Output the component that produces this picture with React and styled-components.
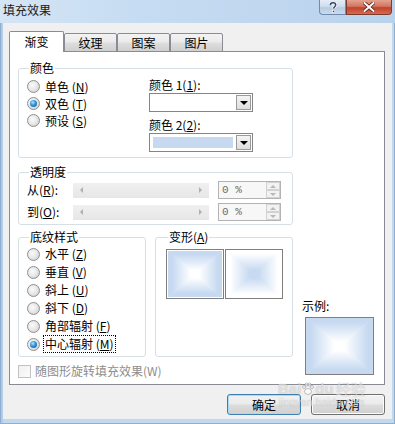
import React, { useId } from 'react';
import styled, { createGlobalStyle } from 'styled-components';

const FONT = `"Noto Sans CJK SC", "Liberation Sans", sans-serif`;

const GlobalStyle = createGlobalStyle`
  html, body { margin: 0; padding: 0; }
  body {
    width: 395px;
    height: 424px;
    overflow: hidden;
    font-family: ${FONT};
    font-size: 12px;
    line-height: 14px;
    color: #000;
  }
`;

const Window = styled.div`
  position: relative;
  width: 395px;
  height: 424px;
  box-sizing: border-box;
  padding: 0 2px 4px 2px;
  display: flex;
  flex-direction: column;
  background: linear-gradient(to right, #a9c4e2 0px, #c3d9ef 3px, #c3d9ef 392px, #a9c4e2 395px);
  border-left: 1px solid #8eaed2;
  border-right: 1px solid #8eaed2;
  border-bottom: 1px solid #8eaed2;
`;

const TitleBar = styled.div`
  height: 23px;
  flex: none;
  display: flex;
  align-items: flex-start;
  justify-content: space-between;
  margin: 0 -3px;
  padding-left: 3px;
  background: linear-gradient(to right, #d4e5f5 0%, #c6dcf2 35%, #b9d2ec 100%);
`;

const Title = styled.div`
  padding-top: 3px;
  font-size: 12px;
  line-height: 14px;
  color: #1a1a1a;
`;

const Controls = styled.div`
  display: flex;
  margin-right: 3px;
`;

const CtlButton = styled.div`
  height: 15px;
  box-sizing: border-box;
  width: ${p => p.$w}px;
  display: flex;
  align-items: center;
  justify-content: center;
  border: 1px solid ${p => (p.$close ? '#7d3a30' : '#6f8cae')};
  border-top: none;
  border-radius: ${p => (p.$close ? '0 0 4px 0' : '0 0 0 4px')};
  background: ${p =>
    p.$close
      ? 'linear-gradient(to bottom, #e6a290 0%, #d27662 45%, #c2422c 55%, #d56a4f 100%)'
      : 'linear-gradient(to bottom, #e4edf7 0%, #cfdded 45%, #b7cbe2 55%, #c9daec 100%)'};
  svg { display: block; }
`;

const Client = styled.div`
  flex: 1;
  background: #f0f0f0;
  padding: 8px 7px 0 6px;
  display: flex;
  flex-direction: column;
`;

const TabStrip = styled.div`
  position: relative;
  z-index: 1;
  height: 21px;
  margin-bottom: -1px;
  display: flex;
  align-items: flex-end;
`;

const Tab = styled.div`
  box-sizing: border-box;
  width: ${p => (p.$active ? 55 : 53)}px;
  height: ${p => (p.$active ? 21 : 19)}px;
  border: 1px solid #898c95;
  border-bottom: ${p => (p.$active ? 'none' : '1px solid #898c95')};
  border-radius: 2px 2px 0 0;
  background: ${p => (p.$active ? '#fff' : 'linear-gradient(to bottom, #f3f3f3 0%, #ebebeb 45%, #dddddd 55%, #cfcfcf 100%)')};
  display: flex;
  align-items: center;
  justify-content: center;
  padding-bottom: ${p => (p.$active ? 1 : 0)}px;
  font-size: 12px;
`;

const Panel = styled.div`
  box-sizing: border-box;
  width: 376px;
  height: 334px;
  background: #fff;
  border: 1px solid #898c95;
  padding: 9px 0 0 8px;
  display: flex;
  flex-direction: column;
`;

const Group = styled.fieldset`
  box-sizing: border-box;
  margin: ${p => p.$mt || 0}px 0 0 0;
  width: ${p => p.$w}px;
  height: ${p => p.$h}px;
  border: 1px solid #d5dfe5;
  border-radius: 3px;
  padding: ${p => p.$pad || '0 0 0 8px'};
  min-width: 0;
`;

const Legend = styled.legend`
  padding: 0 1px;
  margin-left: 2px;
  font-size: 12px;
  line-height: 14px;
`;

const Key = styled.span`
  text-decoration: underline;
`;

const ColorBody = styled.div`
  display: grid;
  grid-template-columns: 122px 104px;
`;

const RadioList = styled.div`
  display: flex;
  flex-direction: column;
  padding-top: ${p => p.$pt || 0}px;
`;

const RadioRow = styled.div`
  height: ${p => p.$h}px;
  display: flex;
  align-items: center;
  gap: 3px;
  white-space: nowrap;
`;

const RadioCircle = styled.span`
  flex: none;
  box-sizing: border-box;
  width: 13px;
  height: 13px;
  border-radius: 50%;
  border: 1px solid #8e8f8f;
  background: radial-gradient(circle at 40% 40%, #fbfbfb 0%, #e9e9e9 45%, #d3d3d3 80%, #f4f4f4 100%);
  display: flex;
  align-items: center;
  justify-content: center;
  &::after {
    content: '';
    display: ${p => (p.$checked ? 'block' : 'none')};
    width: 7px;
    height: 7px;
    border-radius: 50%;
    background: radial-gradient(circle at 40% 35%, #aee4ff 0%, #2f93da 45%, #0f4f93 100%);
  }
`;

const RadioText = styled.span`
  padding: 1px 1px;
  border: 1px dotted ${p => (p.$focus ? '#000' : 'transparent')};
`;

const ColorSide = styled.div`
  display: flex;
  flex-direction: column;
  padding-top: 3px;
`;

const FieldLabel = styled.div`
  height: 14px;
  margin-bottom: ${p => p.$mb || 0}px;
  white-space: nowrap;
`;

const Combo = styled.div`
  box-sizing: border-box;
  width: 104px;
  height: 19px;
  border: 1px solid #858585;
  background: #fff;
  display: flex;
  padding: 1px;
  margin-bottom: ${p => p.$mb || 0}px;
`;

const Swatch = styled.div`
  flex: 1;
  margin: 2px 3px 2px 2px;
  background: ${p => p.$color || 'transparent'};
`;

const DropBtn = styled.div`
  box-sizing: border-box;
  width: 15px;
  border: 1px solid #9a9a9a;
  background: linear-gradient(to bottom, #f4f4f4, #dedede);
  display: flex;
  align-items: center;
  justify-content: center;
  &::after {
    content: '';
    border-left: 4px solid transparent;
    border-right: 4px solid transparent;
    border-top: 4px solid #000;
  }
`;

const SliderRow = styled.div`
  height: ${p => p.$h}px;
  display: flex;
  align-items: center;
`;

const SliderLabel = styled.div`
  width: 46px;
`;

const Track = styled.div`
  box-sizing: border-box;
  width: 136px;
  height: 15px;
  background: linear-gradient(to bottom, #f0f0f0, #e6e6e6);
  display: flex;
  align-items: center;
  justify-content: space-between;
  padding: 0 7px;
  margin-right: 9px;
`;

const Arrow = styled.span`
  width: 0;
  height: 0;
  border-top: 3px solid transparent;
  border-bottom: 3px solid transparent;
  ${p => (p.$dir === 'left' ? 'border-right: 3px solid #b0b0b0;' : 'border-left: 3px solid #b0b0b0;')}
`;

const Spin = styled.div`
  box-sizing: border-box;
  width: 63px;
  height: 18px;
  border: 1px solid #b3b3b3;
  background: #f7f7f7;
  display: flex;
`;

const SpinText = styled.div`
  flex: 1;
  padding-left: 3px;
  color: #6d6d6d;
  font-size: 11px;
  line-height: 16px;
  font-family: "Liberation Mono", monospace;
`;

const SpinBtns = styled.div`
  width: 14px;
  display: flex;
  flex-direction: column;
`;

const SpinBtn = styled.div`
  flex: 1;
  box-sizing: border-box;
  border: 1px solid #d2d2d2;
  background: #f2f2f2;
  display: flex;
  align-items: center;
  justify-content: center;
  &::after {
    content: '';
    border-left: 3px solid transparent;
    border-right: 3px solid transparent;
    ${p => (p.$up ? 'border-bottom: 3px solid #b8b8b8;' : 'border-top: 3px solid #b8b8b8;')}
  }
`;

const BottomGrid = styled.div`
  margin-top: 5px;
  display: grid;
  grid-template-columns: 128px 138px auto;
  column-gap: 9px;
`;

const Variants = styled.div`
  display: flex;
  gap: 1px;
  padding-top: 5px;
`;

const Tile = styled.div`
  box-sizing: border-box;
  width: 58px;
  height: 50px;
  border: 1px solid #7f7f7f;
  padding: ${p => (p.$selected ? 1 : 0)}px;
  background: #fff;
  display: flex;
  svg { display: block; }
`;

const SampleCol = styled.div`
  grid-column: 3;
  grid-row: 1 / span 2;
  align-self: end;
  display: flex;
  flex-direction: column;
  margin-bottom: 3px;
`;

const SampleLabel = styled.div`
  height: 14px;
  margin-bottom: 4px;
`;

const SampleBox = styled.div`
  box-sizing: border-box;
  width: 69px;
  height: 58px;
  margin-left: 3px;
  border: 1px solid #7f7f7f;
  display: flex;
  svg { display: block; }
`;

const CheckRow = styled.div`
  grid-column: 1 / span 2;
  margin-top: 7px;
  display: flex;
  align-items: center;
  gap: 4px;
  color: #8d8d8d;
  white-space: nowrap;
`;

const CheckBox = styled.span`
  box-sizing: border-box;
  width: 13px;
  height: 13px;
  border: 1px solid #c2c2c2;
  background: linear-gradient(135deg, #f0f0f0, #fbfbfb);
`;

const ButtonRow = styled.div`
  width: 376px;
  display: flex;
  justify-content: flex-end;
  gap: 10px;
  margin-top: 9px;
`;

const Button = styled.div`
  box-sizing: border-box;
  width: 74px;
  height: 21px;
  border: 1px solid ${p => (p.$default ? '#3c7fb1' : '#707070')};
  border-radius: 3px;
  box-shadow: ${p => (p.$default ? 'inset 0 0 0 1px #a8dcf6' : 'inset 0 0 0 1px #fcfcfc')};
  background: linear-gradient(to bottom, #f2f2f2 0%, #ebebeb 48%, #dddddd 52%, #cfcfcf 100%);
  display: flex;
  align-items: center;
  justify-content: center;
`;

const Watermark = styled.div`
  position: absolute;
  left: 277px;
  top: 381px;
  display: flex;
  flex-direction: column;
  align-items: center;
  color: rgba(255, 255, 255, 0.55);
  text-shadow: 0 0 1px rgba(120, 120, 120, 0.5);
  pointer-events: none;
`;

const MarkBrand = styled.div`
  display: flex;
  align-items: center;
  font-family: "Liberation Sans", sans-serif;
  font-weight: bold;
  font-size: 15px;
  line-height: 16px;
  span:last-child { font-family: ${FONT}; font-weight: normal; margin-left: 2px; }
`;

const MarkUrl = styled.div`
  font-family: "Liberation Sans", sans-serif;
  font-size: 10px;
  line-height: 12px;
  letter-spacing: 0.3px;
`;

function SquareGradient({ w, h, edge, center }) {
  const id = useId().replace(/:/g, '');
  const cx = w / 2;
  const cy = h / 2;
  const sides = [
    { k: 't', pts: `0,0 ${w},0 ${cx},${cy}`, g: { x1: 0, y1: 0, x2: 0, y2: cy } },
    { k: 'b', pts: `0,${h} ${w},${h} ${cx},${cy}`, g: { x1: 0, y1: h, x2: 0, y2: cy } },
    { k: 'l', pts: `0,0 0,${h} ${cx},${cy}`, g: { x1: 0, y1: 0, x2: cx, y2: 0 } },
    { k: 'r', pts: `${w},0 ${w},${h} ${cx},${cy}`, g: { x1: w, y1: 0, x2: cx, y2: 0 } },
  ];
  return (
    <svg width={w} height={h} viewBox={`0 0 ${w} ${h}`}>
      <defs>
        {sides.map(s => (
          <linearGradient key={s.k} id={id + s.k} gradientUnits="userSpaceOnUse" {...s.g}>
            <stop offset="0" stopColor={edge} />
            <stop offset="0.15" stopColor={edge} />
            <stop offset="0.85" stopColor={center} />
            <stop offset="1" stopColor={center} />
          </linearGradient>
        ))}
      </defs>
      {sides.map(s => (
        <polygon key={s.k} points={s.pts} fill={`url(#${id + s.k})`} stroke={`url(#${id + s.k})`} strokeWidth="0.6" />
      ))}
    </svg>
  );
}

const BLUE = '#c6d9f1';

function Radio({ h, checked, focus, children }) {
  return (
    <RadioRow $h={h}>
      <RadioCircle $checked={checked} />
      <RadioText $focus={focus}>{children}</RadioText>
    </RadioRow>
  );
}

function Slider({ label }) {
  return (
    <SliderRow $h={22}>
      <SliderLabel>{label}</SliderLabel>
      <Track><Arrow $dir="left" /><Arrow $dir="right" /></Track>
      <Spin>
        <SpinText>0 %</SpinText>
        <SpinBtns><SpinBtn $up /><SpinBtn /></SpinBtns>
      </Spin>
    </SliderRow>
  );
}

export default function App() {
  return (
    <>
      <GlobalStyle />
      <Window>
        <TitleBar>
          <Title>填充效果</Title>
          <Controls>
            <CtlButton $w={27}>
              <svg width="8" height="11" viewBox="0 0 8 11">
                <path d="M1.3 3.2 C1.3 1.4 2.5 0.8 4 0.8 C5.6 0.8 6.7 1.7 6.7 3 C6.7 4.6 4.6 4.8 4.6 6.6" fill="none" stroke="#fff" strokeWidth="3" />
                <path d="M1.3 3.2 C1.3 1.4 2.5 0.8 4 0.8 C5.6 0.8 6.7 1.7 6.7 3 C6.7 4.6 4.6 4.8 4.6 6.6" fill="none" stroke="#33475f" strokeWidth="1.5" />
                <rect x="3.6" y="8.3" width="2" height="2" fill="#33475f" stroke="#fff" strokeWidth="0.6" />
              </svg>
            </CtlButton>
            <CtlButton $w={46} $close>
              <svg width="12" height="10" viewBox="0 0 12 10">
                <path d="M1.5 1 L10.5 9 M10.5 1 L1.5 9" stroke="#5d1c12" strokeWidth="3.6" strokeLinecap="square" />
                <path d="M1.5 1 L10.5 9 M10.5 1 L1.5 9" stroke="#fff" strokeWidth="2" strokeLinecap="square" />
              </svg>
            </CtlButton>
          </Controls>
        </TitleBar>
        <Client>
          <TabStrip>
            <Tab $active>渐变</Tab>
            <Tab>纹理</Tab>
            <Tab>图案</Tab>
            <Tab>图片</Tab>
          </TabStrip>
          <Panel>
            <Group $w={275} $h={97}>
              <Legend>颜色</Legend>
              <ColorBody>
                <RadioList $pt={3}>
                  <Radio h={17}>单色 (<Key>N</Key>)</Radio>
                  <Radio h={17} checked>双色 (<Key>T</Key>)</Radio>
                  <Radio h={17}>预设 (<Key>S</Key>)</Radio>
                </RadioList>
                <ColorSide>
                  <FieldLabel $mb={1}>颜色 1(<Key>1</Key>):</FieldLabel>
                  <Combo $mb={6}>
                    <Swatch />
                    <DropBtn />
                  </Combo>
                  <FieldLabel $mb={1}>颜色 2(<Key>2</Key>):</FieldLabel>
                  <Combo>
                    <Swatch $color={BLUE} />
                    <DropBtn />
                  </Combo>
                </ColorSide>
              </ColorBody>
            </Group>

            <Group $w={275} $h={60} $mt={7}>
              <Legend>透明度</Legend>
              <Slider label={<>从(<Key>R</Key>):</>} />
              <Slider label={<>到(<Key>O</Key>):</>} />
            </Group>

            <BottomGrid>
              <Group $w={128} $h={127}>
                <Legend>底纹样式</Legend>
                <RadioList $pt={1}>
                  <Radio h={18}>水平 (<Key>Z</Key>)</Radio>
                  <Radio h={18}>垂直 (<Key>V</Key>)</Radio>
                  <Radio h={18}>斜上 (<Key>U</Key>)</Radio>
                  <Radio h={18}>斜下 (<Key>D</Key>)</Radio>
                  <Radio h={18}>角部辐射 (<Key>F</Key>)</Radio>
                  <Radio h={18} checked focus>中心辐射 (<Key>M</Key>)</Radio>
                </RadioList>
              </Group>
              <Group $w={138} $h={127} $pad="0 0 0 10px">
                <Legend>变形(<Key>A</Key>)</Legend>
                <Variants>
                  <Tile $selected>
                    <SquareGradient w={54} h={46} edge={BLUE} center="#ffffff" />
                  </Tile>
                  <Tile>
                    <SquareGradient w={56} h={48} edge="#ffffff" center={BLUE} />
                  </Tile>
                </Variants>
              </Group>
              <SampleCol>
                <SampleLabel>示例:</SampleLabel>
                <SampleBox>
                  <SquareGradient w={67} h={56} edge={BLUE} center="#ffffff" />
                </SampleBox>
              </SampleCol>
              <CheckRow>
                <CheckBox />
                随图形旋转填充效果(W)
              </CheckRow>
            </BottomGrid>
          </Panel>
          <ButtonRow>
            <Button $default>确定</Button>
            <Button>取消</Button>
          </ButtonRow>
        </Client>
        <Watermark>
          <MarkBrand>
            <span>Bai</span>
            <svg width="14" height="14" viewBox="0 0 14 14">
              <g fill="rgba(255,255,255,0.6)" stroke="rgba(120,120,120,0.45)" strokeWidth="1">
                <ellipse cx="7" cy="9.5" rx="3.5" ry="3" />
                <circle cx="3" cy="5" r="1.5" />
                <circle cx="5.5" cy="2.5" r="1.5" />
                <circle cx="8.5" cy="2.5" r="1.5" />
                <circle cx="11" cy="5" r="1.5" />
              </g>
            </svg>
            <span>du</span>
            <span>经验</span>
          </MarkBrand>
          <MarkUrl>jingyan.baidu.com</MarkUrl>
        </Watermark>
      </Window>
    </>
  );
}
